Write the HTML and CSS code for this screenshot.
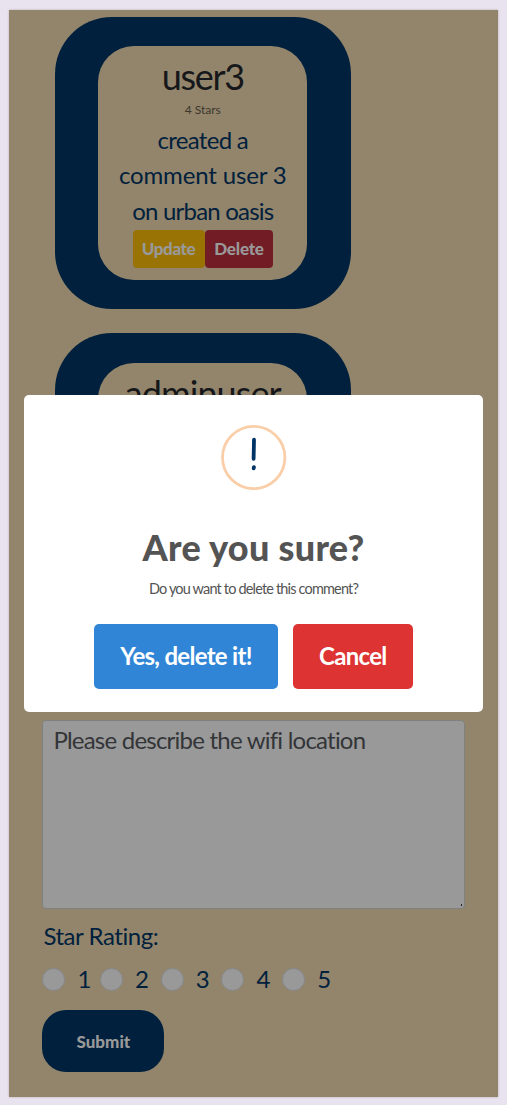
FILE: index.html
```
<!DOCTYPE html>
<html lang="en">
<head>
<meta charset="utf-8">
<title>Comments</title>
<link rel="stylesheet" href="styles.css">
</head>
<body>
<main class="panel">
  <article class="card">
    <div class="card-body">
      <h2 class="name name-user">user3</h2>
      <p class="stars">4 Stars</p>
      <p class="comment"><span class="line-a">created a</span><br><span class="line-b">comment user 3</span><br><span class="line-c">on urban oasis</span></p>
      <div class="actions"><button class="btn update">Update</button><button class="btn delete">Delete</button></div>
    </div>
  </article>
  <article class="card">
    <div class="card-body">
      <h2 class="name name-admin">adminuser</h2>
    </div>
  </article>
  <form class="review">
    <div class="area"><span class="placeholder">Please describe the wifi location</span><i class="grip"></i></div>
    <div class="label"><span>Star Rating:</span></div>
    <div class="ratings">
      <label><i class="radio"></i>1</label>
      <label><i class="radio"></i>2</label>
      <label><i class="radio"></i>3</label>
      <label><i class="radio"></i>4</label>
      <label><i class="radio"></i>5</label>
    </div>
    <button type="button" class="submit">Submit</button>
  </form>
</main>
<section class="modal" role="dialog">
  <svg class="warn" width="66" height="66" viewBox="0 0 66 66" fill="none" stroke-linecap="round">
    <circle cx="32.7" cy="33.5" r="31.2" stroke="#facea8" stroke-width="2.8"/>
    <path d="M33 15.7 32.6 34.8" stroke="#003366" stroke-width="3.8"/>
    <path d="M32.9 43.1 32.7 44.3" stroke="#003366" stroke-width="3.8"/>
  </svg>
  <h1 class="title">Are you sure?</h1>
  <p class="question">Do you want to delete this comment?</p>
  <div class="choices"><button class="choice yes">Yes, delete it!</button><button class="choice cancel">Cancel</button></div>
</section>
</body>
</html>
```
FILE: styles.css
```
* { box-sizing: border-box; }
body {
  margin: 0;
  padding: 10px 9px 8px;
  height: 1105px;
  overflow: hidden;
  background: #e9e3ef;
  font-family: Lato, "Open Sans", sans-serif;
  color: #00203d;
}
h1, h2, p { margin: 0; font-weight: 400; }
button { border: 0; padding: 0; font-family: inherit; white-space: nowrap; }
.panel {
  height: 1087px;
  padding: 7px 33px 0 33.4px;
  background: #93856b;
  box-shadow: 0 0 2px rgba(80, 65, 60, .35);
}
.card {
  width: 296.4px;
  height: 292.4px;
  margin: 0 0 24px 12.2px;
  padding: 29.3px 43.7px;
  border-radius: 57px;
  background: #00203d;
}
.card + .card { margin-bottom: 94.2px; }
.card-body {
  height: 233.7px;
  border-radius: 36px;
  padding-top: 8px;
  background: #93856b;
  text-align: center;
}
.name { font-size: 36px; line-height: 44px; color: #15171a; white-space: nowrap; }
.name-user { letter-spacing: -1.3px; }
.name-admin { letter-spacing: -.9px; }
.stars { margin-top: 3px; font-size: 12px; line-height: 18px; color: #3b372e; }
.comment { margin-top: 2.7px; font-size: 24px; line-height: 35.4px; white-space: nowrap; }
.line-a { letter-spacing: -.7px; }
.line-b { letter-spacing: -.15px; }
.line-c { letter-spacing: -.8px; }
.actions { display: flex; justify-content: center; gap: .5px; margin-top: 2px; }
.btn { height: 38px; padding-bottom: 1px; border-radius: 4px; color: #999; font-size: 17px; font-weight: 900; letter-spacing: -.4px; }
.update { width: 72px; background: #997404; }
.delete { width: 68px; background: #721c26; letter-spacing: -.2px; }
.area {
  height: 188.8px;
  padding: 2px 10px;
  border: 1px solid #7f8180;
  border-radius: 4px;
  background: #999;
  color: #333538;
  font-size: 24px;
  line-height: 34px;
  letter-spacing: -.78px;
  white-space: nowrap;
  position: relative;
}
.grip { position: absolute; right: 2px; bottom: 2px; width: 1px; height: 2px; background: #222; }
.label { margin-top: 9px; padding-left: 1px; font-size: 24px; line-height: 36px; letter-spacing: -.45px; }
.ratings { display: flex; height: 46px; align-items: center; margin-top: 1.5px; font-size: 24px; line-height: 24px; }
.ratings label { display: flex; align-items: center; width: 60.8px; gap: 12px; padding-top: 2px; }
.ratings label:first-child { width: 57.5px; }
.radio { width: 23px; height: 23px; border: 1px solid #85888c; border-radius: 50%; background: #999; }
.submit {
  display: block;
  width: 122px;
  height: 62px;
  margin-top: 8.5px;
  padding-top: 1px;
  border-radius: 24px;
  background: #00203d;
  color: #999;
  font-size: 17px;
  font-weight: 900;
}
.modal {
  position: absolute;
  left: 24px;
  top: 394.6px;
  width: 459px;
  height: 317.4px;
  padding-top: 29.8px;
  border-radius: 5px;
  background: #fff;
  text-align: center;
}
.warn { display: block; margin: 0 auto; }
.title { margin-top: 32.5px; font-size: 36px; line-height: 48px; font-weight: 900; letter-spacing: .3px; color: #545454; }
.question { margin-top: 8px; font-size: 14.5px; line-height: 20px; letter-spacing: -.83px; color: #545454; }
.choices { display: flex; justify-content: center; gap: 15px; margin-top: 25px; }
.choice { height: 65.5px; padding-bottom: 3px; border-radius: 5px; color: #fff; font-size: 24px; font-weight: 700; letter-spacing: -.7px; }
.yes { width: 183.5px; background: #3085d6; }
.cancel { width: 120px; background: #dd3333; }
```
